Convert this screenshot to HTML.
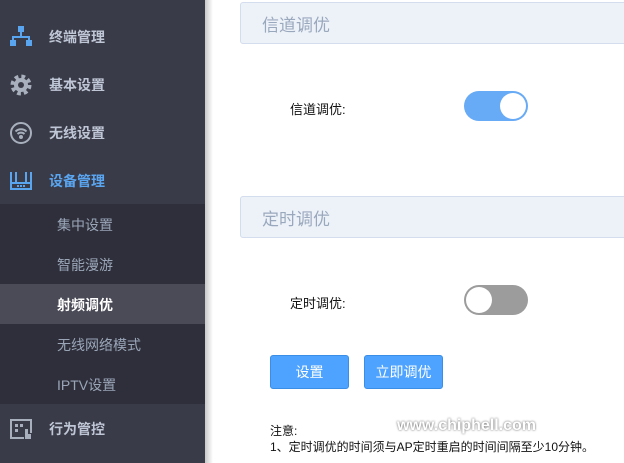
<!DOCTYPE html><html><head><meta charset="utf-8"><style>
body{margin:0;width:624px;height:463px;overflow:hidden;background:#fff;font-family:"Liberation Sans","Noto Sans CJK SC",sans-serif;position:relative}
.sb{position:absolute;left:0;top:0;width:205px;height:463px;background:#3a3b48}
.sh{position:absolute;left:205px;top:0;width:8px;height:463px;background:linear-gradient(to right,#c8c8c8,#fff)}
.it{position:absolute;left:49px;font-size:14px;font-weight:bold;color:#bfc6d6}
.sub{position:absolute;left:0;top:204px;width:205px;height:200px;background:#2e2f3a}
.si{position:absolute;left:57px;font-size:14px;color:#9aa6b8}
.act{position:absolute;left:0;top:284px;width:205px;height:40px;background:#4a4b57}
.ic{position:absolute;left:9px}
.pn{position:absolute;left:240px;width:400px;height:42px;background:#edf2f9;border:1px solid #d3dded;border-radius:3px;box-sizing:border-box;font-size:17px;color:#9aa8bd;padding:8px 0 0 21px}
.lb{position:absolute;left:290px;font-size:13px;color:#111}
.tg{position:absolute;left:464px;width:64px;height:30px;border-radius:15px}
.kn{position:absolute;top:2px;width:26px;height:26px;border-radius:50%;background:#fff}
.bt{position:absolute;top:355px;width:79px;height:34px;background:#4da3ff;border:1px solid #3a8ee6;border-radius:3px;box-sizing:border-box;color:#fff;font-size:14px;text-align:center;line-height:32px}
</style></head><body>
<div class="sb"></div><div class="sh"></div>
<svg class="ic" style="top:25px" width="24" height="24" viewBox="0 0 24 24" fill="#5aa5f0"><rect x="9" y="1" width="6" height="6"/><rect x="11" y="7" width="2" height="5"/><rect x="3" y="11" width="18" height="2"/><rect x="3" y="11" width="2" height="5"/><rect x="19" y="11" width="2" height="5"/><rect x="1" y="15" width="6" height="6"/><rect x="17" y="15" width="6" height="6"/></svg>
<div class="it" style="top:27px">终端管理</div>
<svg class="ic" style="top:73px" width="24" height="24" viewBox="0 0 24 24"><circle cx="12" cy="12" r="8" fill="none" stroke="#a8b0bd" stroke-width="5" stroke-dasharray="3.5 2.8"/><circle cx="12" cy="12" r="7" fill="#a8b0bd"/><circle cx="12" cy="12" r="3" fill="#3a3b48"/></svg>
<div class="it" style="top:75px">基本设置</div>
<svg class="ic" style="top:121px" width="24" height="24" viewBox="0 0 24 24" fill="none" stroke="#a8b0bd" stroke-width="2"><circle cx="12" cy="12" r="10"/><path d="M6.5 10.5a8 8 0 0 1 11 0M8.5 13a5 5 0 0 1 7 0"/><circle cx="12" cy="16" r="1" fill="#a8b0bd"/></svg>
<div class="it" style="top:123px">无线设置</div>
<svg class="ic" style="top:169px" width="24" height="24" viewBox="0 0 24 24" fill="none" stroke="#5aa5f0" stroke-width="2"><path d="M2 3v17h20V3M2 14h20M7 3v11M17 3v11"/><path d="M8 17h2M11 17h2M14 17h2"/></svg>
<div class="it" style="top:171px;color:#5aa5f0">设备管理</div>
<div class="sub"></div><div class="act"></div>
<div class="si" style="top:215px">集中设置</div>
<div class="si" style="top:255px">智能漫游</div>
<div class="si" style="top:295px;color:#fff;font-weight:bold">射频调优</div>
<div class="si" style="top:335px">无线网络模式</div>
<div class="si" style="top:375px">IPTV设置</div>
<svg class="ic" style="top:417px" width="24" height="24" viewBox="0 0 24 24" fill="#a8b0bd"><path d="M1 2h22v14h-2V4H3v16h12v2H1z"/><rect x="6" y="7" width="3" height="3"/><rect x="11" y="7" width="3" height="3"/><rect x="6" y="12" width="3" height="3"/><path d="M16 12h3v5h3v5h-6z"/></svg>
<div class="it" style="top:419px">行为管控</div>
<div class="pn" style="top:2px">信道调优</div>
<div class="pn" style="top:196px">定时调优</div>
<div class="lb" style="top:99px">信道调优:</div>
<div class="tg" style="top:91px;background:#67aaf5"><div class="kn" style="left:36px"></div></div>
<div class="lb" style="top:293px">定时调优:</div>
<div class="tg" style="top:285px;background:#9c9c9c"><div class="kn" style="left:2px"></div></div>
<div class="bt" style="left:270px">设置</div>
<div class="bt" style="left:364px">立即调优</div>
<div style="position:absolute;left:270px;top:423px;font-size:12px;color:#111;line-height:16px">注意:<br>1、定时调优的时间须与AP定时重启的时间间隔至少10分钟。</div>
<div style="position:absolute;left:397px;top:417px;font-size:16px;font-weight:bold;color:#fff;text-shadow:0 0 2px #555">www.chiphell.com</div>
</body></html>
